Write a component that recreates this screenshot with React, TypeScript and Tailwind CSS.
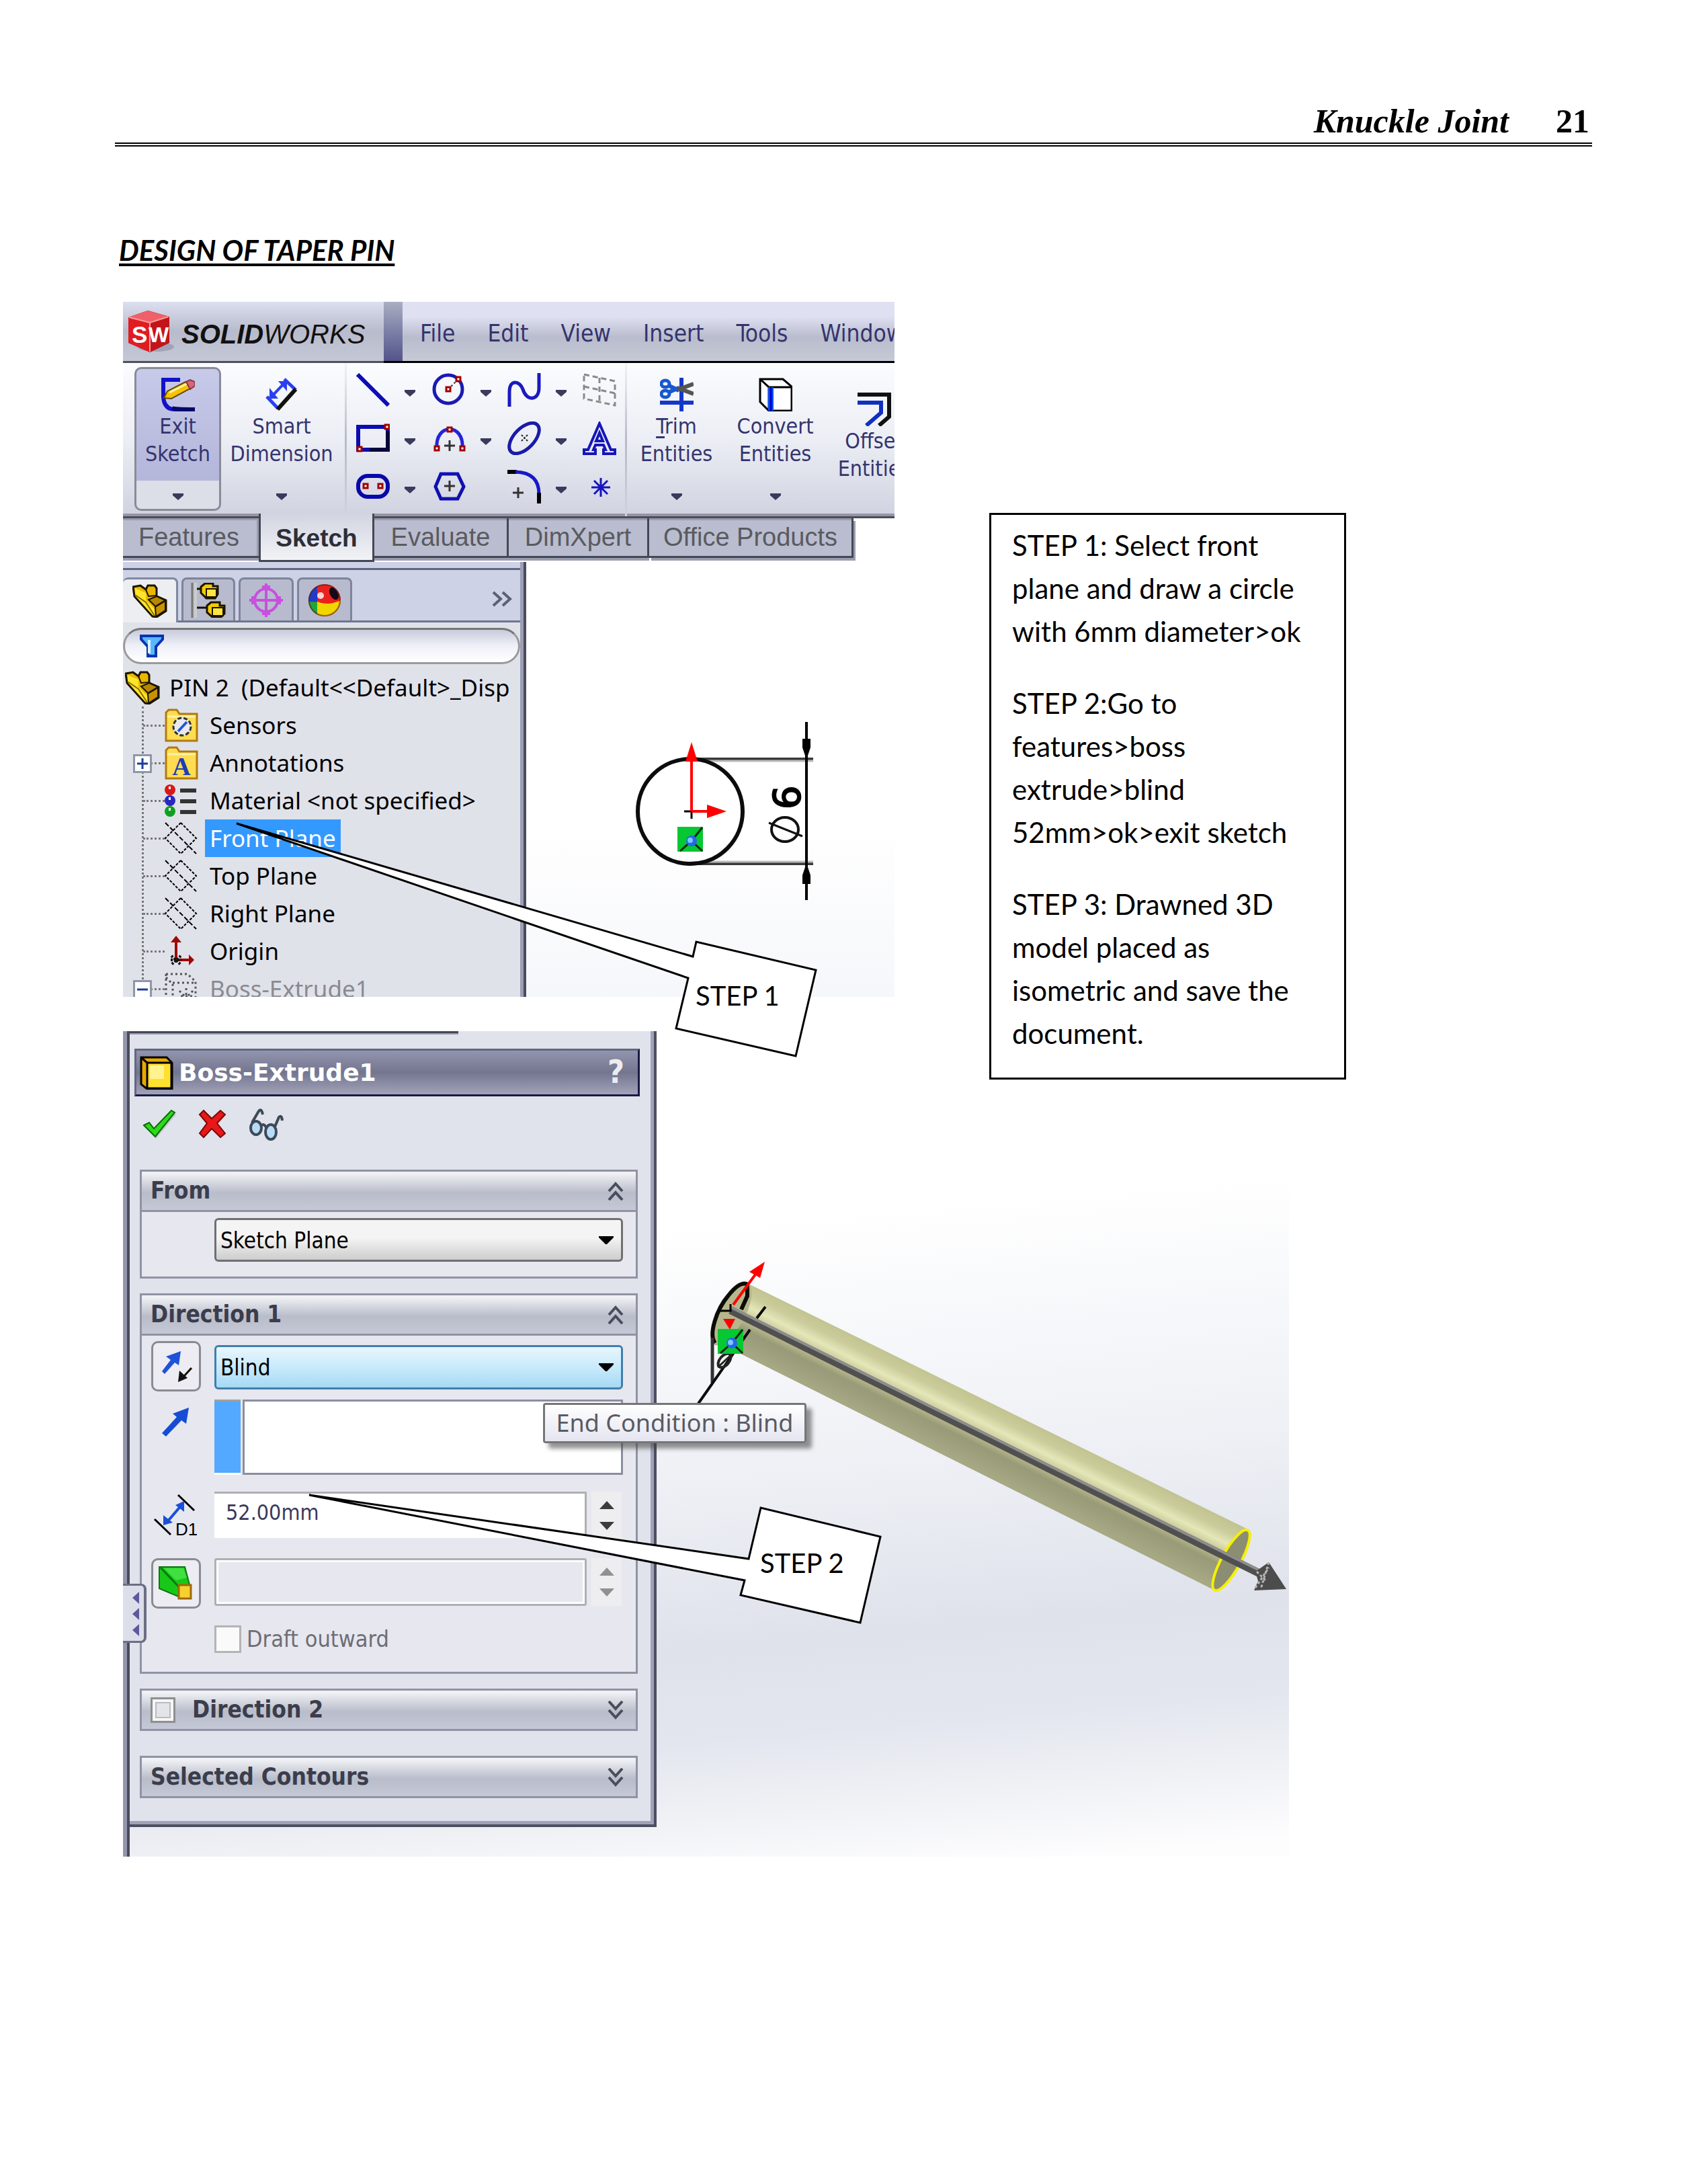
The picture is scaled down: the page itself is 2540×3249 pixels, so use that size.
import type { ReactNode } from "react";

function Caret({ className = "" }: { className?: string }) {
  return (
    <svg viewBox="0 0 16 10" className={`h-[10px] w-[16px] shrink-0 ${className}`}>
      <path d="M0 0H16V3L8 10L0 3Z" fill="#3a3a5c" />
    </svg>
  );
}

function SelectCaret() {
  return (
    <svg viewBox="0 0 22 12" className="pointer-events-none absolute right-[14px] top-[27px] h-[12px] w-[22px]">
      <path d="M0 0H22V2L12 12H10L0 2Z" fill="#000" />
    </svg>
  );
}

function Chevrons({ down = false }: { down?: boolean }) {
  return (
    <svg viewBox="0 0 24 28" className={`h-[28px] w-[24px] ${down ? "rotate-180" : ""}`} fill="none" stroke="#4a4d5c" strokeWidth="4">
      <path d="M2 14L12 3L22 14M2 27L12 16L22 27" />
    </svg>
  );
}

function Logo() {
  return (
    <svg viewBox="0 0 70 66" className="h-[66px] w-[70px]">
      <ellipse cx="42" cy="56" rx="27" ry="7" fill="#8d90a4" opacity="0.6" />
      <path d="M1 12L30 2L62 11V50L33 64L1 50Z" fill="#b01018" />
      <path d="M1 12L30 2L62 11L33 20Z" fill="#f06068" />
      <path d="M1 12L33 20V64L1 50Z" fill="#e01c22" />
      <path d="M33 20L62 11V50L33 64Z" fill="#c3141c" />
      <path d="M2 12L33 20L61 11M33 20V63" fill="none" stroke="#ff9a98" strokeWidth="2" />
      <g fill="#fff" fontFamily="Liberation Sans Narrow, Liberation Sans, sans-serif" fontWeight="bold">
        <text x="6" y="50" fontSize="35">S</text>
        <text x="31" y="49" fontSize="32">W</text>
      </g>
    </svg>
  );
}

function ToolIcon({ children }: { children: ReactNode }) {
  return (
    <svg viewBox="0 0 50 50" className="h-[50px] w-[50px] shrink-0" fill="none">
      {children}
    </svg>
  );
}

// small red square used for sketch handles
function Handle({ x, y }: { x: number; y: number }) {
  return <rect x={x - 3} y={y - 3} width="6" height="6" fill="#fff" stroke="#a00000" strokeWidth="3" />;
}

const exitIcon = (
  <ToolIcon>
    <path d="M28 3H3V28Q4 47 20 47H50" stroke="#1212c8" strokeWidth="6" />
    <path d="M16 45Q20 47 50 47" stroke="#08086a" strokeWidth="6" />
    <path d="M4 30L9 20L36 6L43 16L15 31Z" fill="#f5c400" stroke="#6a4a00" strokeWidth="2" />
    <path d="M12 22L38 9" stroke="#fff0a0" strokeWidth="3" />
    <path d="M37 6L43 3L50 6V12L43 17Z" fill="#d06878" stroke="#903848" strokeWidth="2" />
  </ToolIcon>
);

const smartIcon = (
  <ToolIcon>
    <path d="M29 2L46 18" stroke="#2a40f0" strokeWidth="5" />
    <path d="M3 28L20 46" stroke="#2a40f0" strokeWidth="5" />
    <path d="M19 47L46 17" stroke="#111" strokeWidth="6" />
    <path d="M11 27L30 7" stroke="#2a40f0" strokeWidth="4" />
    <path d="M7 15V31H20Z M20 5H33V20Z" fill="#2a40f0" />
  </ToolIcon>
);

const trimIcon = (
  <ToolIcon>
    <path d="M32 0V50M0 37H50" stroke="#1538c8" strokeWidth="6" />
    <ellipse cx="8" cy="9" rx="6" ry="5" stroke="#1858d0" strokeWidth="5" />
    <ellipse cx="8" cy="24" rx="6" ry="5" stroke="#1858d0" strokeWidth="5" />
    <path d="M12 11L28 19M12 22L28 15" stroke="#1858d0" strokeWidth="6" />
    <path d="M26 18L50 9M26 15L50 24" stroke="#555" strokeWidth="6" />
  </ToolIcon>
);

const convertIcon = (
  <ToolIcon>
    <path d="M2 2H36L49 13V49H15L2 36Z" fill="#fff" stroke="#000" strokeWidth="3" />
    <path d="M2 2L15 14V49M15 14H49" stroke="#000" strokeWidth="3" />
    <path d="M18 14V49" stroke="#0a50ff" strokeWidth="8" />
    <path d="M18 14V49" stroke="#0000c8" strokeWidth="3" />
  </ToolIcon>
);

const offsetIcon = (
  <ToolIcon>
    <path d="M0 3H47V36L32 49" stroke="#111" strokeWidth="6" />
    <path d="M0 15H35V30L13 49" stroke="#1030c0" strokeWidth="6" />
  </ToolIcon>
);

const sketchTools: { name: string; menu: boolean; icon: ReactNode }[] = [
  { name: "Line", menu: true, icon: <path d="M2 2L48 48" stroke="#0c0cb8" strokeWidth="6" /> },
  {
    name: "Circle",
    menu: true,
    icon: (
      <>
        <circle cx="24" cy="24" r="21" stroke="#1a1ab4" strokeWidth="5" />
        <path d="M24 24L38 10" stroke="#333" strokeWidth="2" strokeDasharray="3 3" />
        <Handle x={24} y={24} />
        <Handle x={39} y={9} />
      </>
    ),
  },
  { name: "Spline", menu: true, icon: <path d="M3 50V28C3 8 19 12 23 24C28 42 47 42 47 22V0" stroke="#1a1ac0" strokeWidth="5" /> },
  {
    name: "Grid System",
    menu: false,
    icon: <path d="M2 2L48 12V48L2 38ZM2 20L48 30M25 7V43" stroke="#8a8a8a" strokeWidth="3" strokeDasharray="8 5" />,
  },
  {
    name: "Rectangle",
    menu: true,
    icon: (
      <>
        <path d="M3 8H47V42H3Z" stroke="#0c0cb0" strokeWidth="6" />
        <path d="M47 14V42H20" stroke="#06063c" strokeWidth="6" />
        <Handle x={46} y={8} />
        <Handle x={5} y={41} />
      </>
    ),
  },
  {
    name: "Arc",
    menu: true,
    icon: (
      <>
        <path d="M7 40C4 2 48 2 45 40" stroke="#2424d8" strokeWidth="5" />
        <path d="M26 28V44M18 36H34" stroke="#333" strokeWidth="3" />
        <Handle x={26} y={12} />
        <Handle x={7} y={40} />
        <Handle x={45} y={40} />
      </>
    ),
  },
  {
    name: "Ellipse",
    menu: true,
    icon: (
      <>
        <ellipse cx="25" cy="25" rx="28" ry="15" transform="rotate(-46 25 25)" stroke="#1a1aa8" strokeWidth="5" />
        <path d="M21 20L30 29M30 20L21 29" stroke="#222" strokeWidth="2" strokeDasharray="3 2" />
      </>
    ),
  },
  {
    name: "Text",
    menu: false,
    icon: (
      <>
        <path d="M25 3L42 42H48V48H31V42H34L31 35H19L16 42H19V48H2V42H8Z" stroke="#1616b8" strokeWidth="4" />
        <path d="M25 17L20 29H30Z" stroke="#1616b8" strokeWidth="4" />
      </>
    ),
  },
  {
    name: "Slot",
    menu: true,
    icon: (
      <>
        <rect x="3" y="9" width="44" height="31" rx="14" stroke="#0808a8" strokeWidth="6" />
        <Handle x={14} y={24} />
        <Handle x={36} y={24} />
      </>
    ),
  },
  {
    name: "Polygon",
    menu: false,
    icon: (
      <>
        <path d="M13 6H38L47 25L38 43H13L5 25Z" stroke="#1010b0" strokeWidth="5" />
        <path d="M26 16V32M18 24H34" stroke="#333" strokeWidth="3" />
      </>
    ),
  },
  {
    name: "Fillet",
    menu: true,
    icon: (
      <>
        <path d="M0 3H14" stroke="#000" strokeWidth="6" />
        <path d="M12 3Q47 4 47 36" stroke="#1818c8" strokeWidth="5" />
        <path d="M47 34V50" stroke="#000" strokeWidth="6" />
        <path d="M16 26V42M8 34H24" stroke="#333" strokeWidth="3" />
      </>
    ),
  },
  {
    name: "Point",
    menu: false,
    icon: <path d="M27 12V40M13 26H41M17 16L37 36M37 16L17 36" stroke="#1414c0" strokeWidth="3" />,
  },
];

function BigTool({ icon, children, className = "" }: { icon: ReactNode; children: ReactNode; className?: string }) {
  return (
    <button className={`flex flex-col items-center text-center leading-[41px] ${className}`}>
      {icon}
      <span className="mt-[2px] whitespace-nowrap">{children}</span>
      <Caret className="mt-[38px]" />
    </button>
  );
}

function TitleBar() {
  const menus = ["File", "Edit", "View", "Insert", "Tools", "Window"];
  return (
    <div className="flex h-[91px] shrink-0">
      <div className="flex w-[388px] shrink-0 items-center gap-[10px] border-b-[3px] border-[#50505e] bg-linear-to-b from-[#dcdff0] via-[#b8bbcc] to-[#c4c8d6] pl-[7px]">
        <Logo />
        <span className="pt-2 font-[family-name:'Liberation_Sans',sans-serif] text-[40px] text-[#111] italic">
          <b>SOLID</b>WORKS
        </span>
      </div>
      <div className="w-[28px] shrink-0 border-b-[3px] border-black bg-linear-to-b from-[#a9aec2] to-[#54548a]" />
      <nav className="flex grow items-center gap-12 border-b-[3px] border-black bg-linear-to-b from-[#dfe1f2] from-25% via-[#b9bccd] via-60% to-[#c6cad6] pt-[6px] pl-[26px] text-[35px] text-[#34346e]">
        {menus.map((m) => (
          <a key={m} href="#">
            {m}
          </a>
        ))}
      </nav>
    </div>
  );
}

function Toolbar() {
  return (
    <div className="flex h-[231px] shrink-0 border-b-[3px] border-[#4a4c5a] bg-linear-to-b from-[#fbfcfe] via-[#eceef5] to-[#d0d2e0] pl-[17px] text-[32px] text-[#34346e] shadow-[inset_0_-4px_0_#9496a6]">
      <div className="mt-[6px] h-[214px] w-[129px] shrink-0 rounded-[10px] border-[3px] border-[#8a8b98] bg-linear-to-b from-[#c8caea] from-0% via-[#b4b6da] via-80% to-[#dcdee8] to-80%">
        <BigTool icon={exitIcon} className="w-full pt-[13px]">
          Exit
          <br />
          Sketch
        </BigTool>
      </div>
      <BigTool icon={smartIcon} className="ml-[10px] w-[160px] shrink-0 pt-[22px]">
        Smart
        <br />
        Dimension
      </BigTool>
      <div className="mx-[14px] w-[3px] shrink-0 bg-linear-to-b from-[#f2f3f8] via-[#b8bac8] to-[#d0d2e0]" />
      <div className="mt-1 grid h-[216px] w-[388px] shrink-0 grid-cols-[113px_112px_112px_50px] grid-rows-3">
        {sketchTools.map((t) => (
          <button key={t.name} aria-label={t.name} className="flex items-center gap-[22px]">
            <ToolIcon>{t.icon}</ToolIcon>
            {t.menu && <Caret className="mt-[10px]" />}
          </button>
        ))}
      </div>
      <div className="ml-[12px] w-[3px] shrink-0 bg-linear-to-b from-[#f2f3f8] via-[#b8bac8] to-[#d0d2e0]" />
      <BigTool icon={trimIcon} className="w-[147px] shrink-0 pt-[22px]">
        <u className="underline-offset-4">T</u>rim
        <br />
        Entities
      </BigTool>
      <BigTool icon={convertIcon} className="w-[147px] shrink-0 pt-[22px]">
        Convert
        <br />
        Entities
      </BigTool>
      <button className="flex w-[147px] shrink-0 flex-col items-center pt-[44px] leading-[41px]">
        {offsetIcon}
        <span className="mt-[2px]">
          Offset
          <br />
          Entities
        </span>
      </button>
    </div>
  );
}

function CommandTabs() {
  return (
    <div className="flex h-[65px] shrink-0 items-start bg-white font-[family-name:'Liberation_Sans',sans-serif] text-[38px] text-[#5a5a60]">
      <button className="h-[59px] w-[202px] border-b-[3px] border-[#444854] bg-[#b9bdcf] pr-[6px] shadow-[inset_-3px_3px_0_#9a9caf,0_4px_0_#9a9caf]">
        Features
      </button>
      <button className="relative -mt-[7px] h-[72px] w-[172px] border-x-[3px] border-b-[3px] border-[#444854] bg-linear-to-b from-[#d2d4e1] to-[#f2f3f6] pt-[4px] text-[37px] font-bold text-[#2e2e38]">
        Sketch
      </button>
      <button className="h-[59px] w-[200px] border-r-[3px] border-b-[3px] border-[#444854] bg-[#b9bdcf] shadow-[inset_0_3px_0_#9a9caf,0_4px_0_#9a9caf]">
        Evaluate
      </button>
      <button className="h-[59px] w-[209px] border-r-[3px] border-b-[3px] border-[#444854] bg-[#b9bdcf] shadow-[inset_0_3px_0_#9a9caf,0_4px_0_#9a9caf]">
        DimXpert
      </button>
      <button className="h-[59px] w-[304px] border-r-[3px] border-b-[3px] border-[#444854] bg-[#b9bdcf] shadow-[inset_0_3px_0_#9a9caf,3px_4px_0_#9a9caf]">
        Office Products
      </button>
    </div>
  );
}

function PartIcon() {
  return (
    <svg viewBox="0 0 52 50" className="h-[50px] w-[52px] shrink-0">
      <path d="M1 4L12 2L20 8L23 2L33 2L36 6V18L50 24V40L36 49L30 48L3 18Z" fill="#e8b800" stroke="#1c1400" strokeWidth="3" />
      <path d="M4 6L20 13V24L34 38V47L30 46L4 17Z" fill="#ffe52a" />
      <path d="M4 16L20 27L33 47" fill="none" stroke="#8a6a00" strokeWidth="2" />
      <path d="M34 34L49 25V39L35 48Z" fill="#c89200" stroke="#1c1400" strokeWidth="2" />
      <path d="M24 23L36 18L49 24L34 33Z" fill="#b88600" stroke="#1c1400" strokeWidth="2" />
      <path d="M12 3L20 8L24 18L36 17" fill="none" stroke="#1c1400" strokeWidth="2" />
    </svg>
  );
}

function ConfigIcon() {
  return (
    <svg viewBox="0 0 52 52" className="h-[52px] w-[52px]" fill="none">
      <path d="M2 0V52" stroke="#777" strokeWidth="3" />
      <path d="M7 0V52" stroke="#ccc" strokeWidth="4" />
      <path d="M9 9H20M9 37H28" stroke="#111" strokeWidth="3" />
      <path d="M15 6L21 1H33V5H40V17L36 23H23L15 15Z" fill="#f4cc00" stroke="#1c1400" strokeWidth="3" />
      <path d="M23 9H38V21H23Z" fill="#ffe640" stroke="#1c1400" strokeWidth="2" />
      <path d="M24 34L30 29H43V34H50V46L45 51H32L24 44Z" fill="#f4cc00" stroke="#1c1400" strokeWidth="3" />
      <path d="M32 37H48V49H32Z" fill="#ffe640" stroke="#1c1400" strokeWidth="2" />
    </svg>
  );
}

function TargetIcon() {
  return (
    <svg viewBox="0 0 50 50" className="h-[50px] w-[50px]" fill="none" stroke="#c84fe0" strokeWidth="4">
      <circle cx="25" cy="25" r="17" />
      <path d="M25 0V50M0 25H50M19 5H31M19 45H31M5 19V31M45 19V31" />
    </svg>
  );
}

function BallIcon() {
  return (
    <svg viewBox="0 0 50 50" className="h-[50px] w-[50px]">
      <circle cx="25" cy="25" r="24" fill="#e8211c" />
      <path d="M14 4A24 24 0 0 0 1 27L14 27Z" fill="#1e3cc8" />
      <path d="M1 27A24 24 0 0 0 14 46L15 28Z" fill="#1aa83c" />
      <path d="M14 27Q30 34 49 25A24 24 0 0 1 14 46Z" fill="#f2d600" />
      <ellipse cx="39" cy="15" rx="6" ry="10" transform="rotate(-28 39 15)" fill="#150818" />
      <circle cx="19" cy="18" r="5" fill="#fff" opacity="0.8" />
      <circle cx="25" cy="25" r="23" fill="none" stroke="#5a2010" strokeWidth="2" opacity="0.6" />
    </svg>
  );
}

function PlaneIcon() {
  return (
    <svg viewBox="0 0 50 50" className="h-[50px] w-[50px]" fill="none" stroke="#000" strokeWidth="2">
      <path d="M24 2L47 25L24 48L1 25Z" strokeDasharray="4 2" />
      <path d="M1 2L47 48" strokeDasharray="7 3" />
    </svg>
  );
}

function Folder({ children }: { children: ReactNode }) {
  return (
    <svg viewBox="0 0 50 50" className="h-[50px] w-[50px]">
      <path d="M2 48V6L6 2H18L22 8H48V48Z" fill="#ffdc50" stroke="#b07a10" strokeWidth="3" />
      <path d="M4 12H46" stroke="#fff0a8" strokeWidth="3" />
      {children}
    </svg>
  );
}

const sensorsIcon = (
  <Folder>
    <circle cx="26" cy="27" r="13" fill="#e8eaf0" stroke="#333" strokeWidth="3" strokeDasharray="6 3" />
    <path d="M20 34L33 20" stroke="#2456d8" strokeWidth="4" />
  </Folder>
);

const annotationsIcon = (
  <Folder>
    <text x="25" y="43" textAnchor="middle" fontSize="38" fontWeight="bold" fontFamily="Liberation Serif, serif" fill="#1c3cb8">
      A
    </text>
  </Folder>
);

const materialIcon = (
  <svg viewBox="0 0 50 50" className="h-[50px] w-[50px]">
    <circle cx="8" cy="9" r="8" fill="#d81818" />
    <circle cx="8" cy="25" r="8" fill="#2828c0" />
    <circle cx="8" cy="41" r="8" fill="#10a020" />
    <path d="M6 6h3M6 22h3M6 38h3" stroke="#fff" strokeWidth="4" />
    <path d="M23 10H47M23 26H47M23 42H47" stroke="#333" strokeWidth="6" />
  </svg>
);

const originIcon = (
  <svg viewBox="0 0 50 50" className="h-[50px] w-[50px]">
    <path d="M17 38V8M17 38H38" stroke="#a00808" strokeWidth="4" />
    <path d="M9 12L17 2L25 12ZM36 30L44 38L36 46Z" fill="#a00808" />
    <path d="M10 32L24 45M24 32L10 45M9 38H25" stroke="#111" strokeWidth="4" strokeDasharray="3 2" />
  </svg>
);

const bossIcon = (
  <svg viewBox="0 0 50 50" className="h-[50px] w-[50px]" fill="none" stroke="#555" strokeWidth="3" strokeDasharray="3 4">
    <path d="M2 3H34L46 14V50M2 3V50M2 8L12 18V50M12 16H46" />
    <path d="M22 28L42 48M42 28L22 48M32 24V50M24 36H42" />
  </svg>
);

const treeItems: { label: string; icon: ReactNode; expand?: string; selected?: boolean; muted?: boolean }[] = [
  { label: "Sensors", icon: sensorsIcon },
  { label: "Annotations", icon: annotationsIcon, expand: "+" },
  { label: "Material <not specified>", icon: materialIcon },
  { label: "Front Plane", icon: <PlaneIcon />, selected: true },
  { label: "Top Plane", icon: <PlaneIcon /> },
  { label: "Right Plane", icon: <PlaneIcon /> },
  { label: "Origin", icon: originIcon },
  { label: "Boss-Extrude1", icon: bossIcon, expand: "-", muted: true },
];

function FeatureTree() {
  return (
    <aside className="flex w-[600px] shrink-0 flex-col border-r-[4px] border-[#4a4c5e] bg-[#e0e2ea]">
      <div className="flex grow flex-col overflow-hidden border-r-[5px] border-[#9c9fb5]">
        <div className="flex h-[90px] shrink-0 items-end border-b-[3px] border-[#6f7690] bg-[#ced2e6] shadow-[inset_0_9px_0_#ced2e6,inset_0_12px_0_#5f6680]">
          <button aria-label="Feature tree" className="-mb-[3px] flex h-[67px] w-[82px] items-center justify-center rounded-t-[8px] border-t-[3px] border-r-[3px] border-[#8088a0] bg-[#eceef2]">
            <PartIcon />
          </button>
          <button aria-label="Properties" className="ml-[5px] flex h-[64px] w-[80px] items-center justify-center rounded-t-[8px] border-x-[3px] border-t-[3px] border-[#7d849c] bg-[#b7bbcd]">
            <ConfigIcon />
          </button>
          <button aria-label="DimXpert manager" className="ml-[5px] flex h-[64px] w-[82px] items-center justify-center rounded-t-[8px] border-x-[3px] border-t-[3px] border-[#7d849c] bg-[#b7bbcd]">
            <TargetIcon />
          </button>
          <button aria-label="Display manager" className="ml-[5px] flex h-[64px] w-[82px] items-center justify-center rounded-t-[8px] border-x-[3px] border-t-[3px] border-[#7d849c] bg-[#b7bbcd]">
            <BallIcon />
          </button>
          <button aria-label="More" className="mr-[12px] mb-[20px] ml-auto">
            <svg viewBox="0 0 30 24" className="h-[24px] w-[30px]" fill="none" stroke="#5c6070" strokeWidth="4">
              <path d="M2 2L13 12L2 22M16 2L27 12L16 22" />
            </svg>
          </button>
        </div>
        <label className="mt-[8px] flex h-[54px] shrink-0 items-center rounded-full border-[3px] border-t-[#777] border-[#9a9a9a] bg-linear-to-b from-[#c8cbdc] via-[#f0f1f8] to-white pl-[22px]">
          <svg viewBox="0 0 36 34" className="h-[34px] w-[36px] shrink-0">
            <path d="M2 2H34V7L24 18V32H12V18L2 7Z" fill="#58b8ff" stroke="#0a34b0" strokeWidth="4" />
            <path d="M14 8V28" stroke="#d8f2ff" strokeWidth="4" />
          </svg>
          <input aria-label="Filter" className="w-full min-w-0 grow bg-transparent px-2 outline-none" />
        </label>
        <div className="relative mt-[7px] shrink-0 font-[family-name:'Noto_Sans',sans-serif] text-[35px] leading-[56px] text-black">
          <div className="absolute top-[56px] bottom-0 left-[28px] border-l-[3px] border-dotted border-[#777]" />
          <div className="flex h-[56px] items-center gap-[14px] whitespace-pre pl-[3px]">
            <PartIcon />
            {"PIN 2  (Default<<Default>_Disp"}
          </div>
          <ul>
            {treeItems.map((item) => (
              <li key={item.label} className="relative flex h-[56px] items-center">
                <span className="ml-[30px] w-[32px] border-t-[3px] border-dotted border-[#777]" />
                {item.expand && (
                  <button
                    aria-label={item.expand === "+" ? "Expand" : "Collapse"}
                    className="absolute left-[15px] top-[15px] flex h-[28px] w-[28px] items-center justify-center border-[3px] border-[#8f96a8] bg-white"
                  >
                    <svg viewBox="0 0 16 16" className="h-[16px] w-[16px]" stroke="#1c3c9c" strokeWidth="3">
                      <path d={item.expand === "+" ? "M0 8H16M8 0V16" : "M0 8H16"} />
                    </svg>
                  </button>
                )}
                <span className="w-[60px]">{item.icon}</span>
                <span className={`px-[7px] ${item.selected ? "bg-[#3399ff] text-white" : item.muted ? "text-[#8a8a90]" : ""}`}>
                  {item.label}
                </span>
              </li>
            ))}
          </ul>
        </div>
      </div>
    </aside>
  );
}

function OriginBadge({ x, y }: { x: number; y: number }) {
  return (
    <g transform={`translate(${x} ${y})`}>
      <rect width="38" height="37" fill="#06c832" />
      <path d="M4 36L21 21L37 36M21 21L37 1" fill="none" stroke="#0a2a10" strokeWidth="3" />
      <circle cx="21" cy="21" r="8" fill="#2468e8" />
      <circle cx="19" cy="20" r="4" fill="#7cc8ff" />
    </g>
  );
}

function SketchView() {
  return (
    <svg viewBox="783 836 548 647" className="h-[647px] min-w-0 grow bg-linear-to-b from-white from-60% to-[#f6f7fa]">
      <path d="M1035 1129H1210M1035 1285H1210" stroke="#3a3a3a" strokeWidth="4" />
      <path d="M1050 1132H1210M1050 1282H1210" stroke="#bbb" strokeWidth="3" />
      <circle cx="1027" cy="1207" r="78" fill="none" stroke="#0c0c0c" strokeWidth="6" />
      <path d="M1200 1074V1339" stroke="#000" strokeWidth="4" />
      <path d="M1194 1099H1206V1112L1200 1130L1194 1112ZM1194 1315H1206V1302L1200 1284L1194 1302Z" fill="#000" />
      <path d="M1018 1207H1029V1218" fill="none" stroke="#000" strokeWidth="3" />
      <path d="M1029 1207V1130M1029 1207H1056" stroke="#f00" strokeWidth="4" />
      <path d="M1020 1133L1029 1104L1038 1133ZM1052 1197L1081 1207L1052 1217Z" fill="#f00" />
      <OriginBadge x={1008} y={1230} />
      <g transform="translate(1190 1254) rotate(-90)" fontFamily="DejaVu Sans, sans-serif">
        <ellipse cx="20" cy="-22" rx="18" ry="20" fill="none" stroke="#111" strokeWidth="4" />
        <path d="M10 4L30 -46" stroke="#111" strokeWidth="3" />
        <text x="50" y="0" fontSize="56" stroke="#000" strokeWidth="2">
          6
        </text>
      </g>
    </svg>
  );
}

function SketchFigure() {
  return (
    <div className="flex h-[1034px] w-[1148px] shrink-0 flex-col overflow-hidden">
      <TitleBar />
      <Toolbar />
      <CommandTabs />
      <div className="flex grow items-start">
        <FeatureTree />
        <SketchView />
      </div>
    </div>
  );
}

function Instructions() {
  return (
    <section className="relative z-10 mt-[314px] -mb-40 ml-[141px] w-[531px] border-[3px] border-black bg-white px-[31px] pt-[13px] pb-[20px] font-[family-name:Lato,sans-serif] text-[42px] leading-[64px]">
      <p className="mb-[43px]">
        STEP 1: Select front
        <br />
        plane and draw a circle
        <br />
        with 6mm diameter&gt;ok
      </p>
      <p className="mb-[43px]">
        STEP 2:Go to
        <br />
        features&gt;boss
        <br />
        extrude&gt;blind
        <br />
        52mm&gt;ok&gt;exit sketch
      </p>
      <p className="mb-[14px]">
        STEP 3: Drawned 3D
        <br />
        model placed as
        <br />
        isometric and save the
        <br />
        document.
      </p>
    </section>
  );
}

function SectionHeader({ children, down }: { children: ReactNode; down?: boolean }) {
  return (
    <div className="flex h-[57px] items-center justify-between bg-linear-to-b from-[#f0f1f5] from-5% via-[#b9bdca] via-55% to-[#c5c8d6] pr-[18px] pl-[13px] text-[35px] font-bold text-[#3b3d4c]">
      {children}
      <button aria-label={down ? "Expand section" : "Collapse section"}>
        <Chevrons down={down} />
      </button>
    </div>
  );
}

function Spinner({ muted = false }: { muted?: boolean }) {
  return (
    <span className="ml-[7px] flex h-[71px] w-[45px] flex-col items-center justify-around bg-[#eeeef0] py-1">
      <button aria-label="Increase">
        <svg viewBox="0 0 22 12" className="block h-[12px] w-[22px]">
          <path d="M0 12L11 0L22 12Z" fill={muted ? "#909090" : "#3c3c3c"} />
        </svg>
      </button>
      <button aria-label="Decrease">
        <svg viewBox="0 0 22 12" className="block h-[12px] w-[22px]">
          <path d="M0 0L11 12L22 0Z" fill={muted ? "#909090" : "#3c3c3c"} />
        </svg>
      </button>
    </span>
  );
}

function PropertyPanel() {
  return (
    <div className="relative h-[1184px] w-[784px] shrink-0 border-r-[4px] border-b-[4px] border-[#4d4e5f] bg-[#e0e3eb] text-[33px] shadow-[inset_-5px_-5px_0_#9fa2b8]">
      <div className="h-[5px] w-[489px] border-b-2 border-[#9a9cae] bg-[#454656]" />
      <div className="mt-[21px] ml-[7px] flex h-[71px] w-[752px] items-center border-[3px] border-t-[#626880] border-r-[#1a1a44] border-b-[#1a1a44] border-l-[#626880] bg-linear-to-b from-[#9394ae] via-[#74768f] to-[#a2a2ba] pr-[20px] pl-[5px] text-white">
        <svg viewBox="0 0 50 50" className="h-[50px] w-[50px]">
          <path d="M2 2H40L48 10V49H11L2 42Z" fill="#e8a800" stroke="#000" strokeWidth="3" />
          <path d="M11 10H47V48H11Z" fill="#ffe030" stroke="#000" strokeWidth="3" />
          <path d="M3 3L11 10" stroke="#000" strokeWidth="3" />
          <path d="M15 14H36V34H15Z" fill="#fff8a8" opacity="0.8" />
        </svg>
        <h3 className="ml-[8px] font-[family-name:'DejaVu_Sans',sans-serif] text-[36px] font-bold">Boss-Extrude1</h3>
        <button className="ml-auto pb-1 text-[48px] leading-none font-bold text-[#ececf0]">?</button>
      </div>
      <div className="mt-[17px] ml-[19px] flex items-center gap-[31px]">
        <button aria-label="OK">
          <svg viewBox="0 0 52 46" className="h-[46px] w-[52px]">
            <path d="M6 27L14 25L20 33L44 5L50 8L20 44Z" fill="#999" opacity="0.4" />
            <path d="M2 24L10 20L17 29L43 2L48 5L19 41Z" fill="#2adc18" stroke="#0a6a08" strokeWidth="2" />
          </svg>
        </button>
        <button aria-label="Cancel">
          <svg viewBox="0 0 44 46" className="h-[46px] w-[44px]">
            <path d="M2 8L8 2L20 14L33 2L40 8L28 21L40 36L33 42L20 29L8 42L2 36L13 21Z" fill="#e81818" stroke="#7a0808" strokeWidth="2" />
          </svg>
        </button>
        <button aria-label="Preview">
          <svg viewBox="0 0 52 50" className="h-[50px] w-[52px]" fill="none" stroke="#3c4a58" strokeWidth="4">
            <ellipse cx="11" cy="30" rx="8" ry="10" fill="#b8dcf8" />
            <ellipse cx="33" cy="36" rx="8" ry="11" fill="#b8dcf8" />
            <path d="M18 27Q22 22 26 29M5 22L15 5Q19 0 21 10M39 28L45 14Q49 10 50 19" />
          </svg>
        </button>
      </div>

      <section className="mt-[42px] ml-[15px] w-[741px] border-[3px] border-[#9093a3] bg-[#e6e7ef]">
        <SectionHeader>From</SectionHeader>
        <div className="border-t-[3px] border-[#9093a3] pt-[9px] pb-[22px] pl-[108px]">
          <div className="relative w-[608px]">
            <select aria-label="From" className="h-[65px] w-full appearance-none rounded-[6px] border-[3px] border-[#707070] bg-linear-to-b from-[#f4f4f4] from-45% to-[#cdcdcd] px-[6px] pt-[2px]">
              <option>Sketch Plane</option>
            </select>
            <SelectCaret />
          </div>
        </div>
      </section>

      <section className="mt-[22px] ml-[15px] w-[741px] border-[3px] border-[#9093a3] bg-[#e6e7ef]">
        <SectionHeader>Direction 1</SectionHeader>
        <div className="grid grid-cols-[94px_608px] gap-y-[12px] border-t-[3px] border-[#9093a3] pt-[8px] pb-[28px] pl-[14px]">
          <button aria-label="Reverse direction" className="h-[75px] w-[74px] rounded-[10px] border-[3px] border-[#8a8a92] bg-[#ececf2]">
            <svg viewBox="0 0 68 69" className="h-[69px] w-[68px]">
              <path d="M13 42L26 25L19 20L41 12L38 33L32 29L17 46Z" fill="#1e52d8" />
              <path d="M57 37L46 49" stroke="#111" strokeWidth="3" />
              <path d="M37 58L39 41L51 52Z" fill="#111" />
            </svg>
          </button>
          <div className="relative mt-[6px] h-[66px]">
            <select aria-label="End condition" className="h-[66px] w-full appearance-none rounded-[6px] border-[3px] border-[#3f7fae] bg-linear-to-b from-[#e8f6fd] via-[#c8eafb] to-[#a6d9f4] px-[6px] pt-[2px]">
              <option>Blind</option>
            </select>
            <SelectCaret />
          </div>
          <svg viewBox="0 0 50 50" className="mt-[8px] ml-[12px] h-[50px] w-[50px]">
            <path d="M4 42L26 18L20 13L44 4L40 28L33 23L10 47Z" fill="#164cd4" />
          </svg>
          <div className="flex h-[112px] gap-[3px]">
            <span className="w-[39px] border-t-[3px] border-b-[3px] border-t-[#a0a0a0] border-b-white bg-[#53a8ff]" />
            <span className="grow border-[3px] border-[#8b8ea0] bg-white" />
          </div>
          <svg viewBox="0 0 66 66" className="mt-[15px] ml-[2px] h-[66px] w-[66px]" fill="none" stroke="#000" strokeWidth="3">
            <path d="M38 3L62 26M3 39L27 62" />
            <path d="M20 45L44 17" stroke="#1850d8" strokeWidth="4" />
            <path d="M16 48V33L30 44ZM47 12V28L34 18Z" fill="#1850d8" stroke="none" />
            <text x="34" y="63" fontSize="26" fill="#000" stroke="none" fontFamily="Liberation Sans, sans-serif">
              D1
            </text>
          </svg>
          <div className="mt-[13px] flex h-[71px]">
            <input
              aria-label="Depth"
              defaultValue="52.00mm"
              className="h-[69px] w-[554px] border-t-[3px] border-r-[3px] border-[#b0b0b0] bg-white px-[17px] pb-[10px] text-[32px] text-[#3a3a5a]"
            />
            <Spinner />
          </div>
          <button aria-label="Draft" className="mt-[16px] h-[75px] w-[74px] rounded-[10px] border-[3px] border-[#8a8a92] bg-[#ececf2]">
            <svg viewBox="0 0 68 69" className="h-[69px] w-[68px]">
              <path d="M9 10H47L56 44L42 56L9 42Z" fill="#18c818" stroke="#0a7a10" strokeWidth="2" />
              <path d="M11 11L46 48" stroke="#0a7a10" strokeWidth="3" />
              <path d="M16 12H45L50 26L34 30Z" fill="#3fe040" />
              <path d="M38 37H56V57H38Z" fill="#f8d030" stroke="#a06808" strokeWidth="3" />
            </svg>
          </button>
          <div className="mt-[16px] flex h-[71px]">
            <input
              aria-label="Draft angle"
              disabled
              className="h-[71px] w-[554px] rounded-[3px] border-[3px] border-[#b0b0b4] bg-[#e6e7ef] shadow-[inset_0_0_0_3px_#fff]"
            />
            <Spinner muted />
          </div>
          <label className="col-start-2 mt-[13px] flex h-[41px] items-center gap-[8px] text-[34px] text-[#6e6e74]">
            <input type="checkbox" disabled className="h-[41px] w-[40px] appearance-none border-[3px] border-[#b4b4b4] bg-[#fafafa]" />
            Draft outward
          </label>
        </div>
      </section>

      <section className="mt-[22px] ml-[15px] w-[741px] border-[3px] border-[#9093a3]">
        <SectionHeader down>
          <label className="flex items-center gap-[25px]">
            <input type="checkbox" className="h-[38px] w-[37px] appearance-none border-[3px] border-[#8f8f8f] bg-[#e4e4e8] shadow-[inset_0_0_0_4px_#f6f6f6,inset_0_0_0_6px_#b8bcc4]" />
            Direction 2
          </label>
        </SectionHeader>
      </section>
      <section className="mt-[37px] ml-[15px] w-[741px] border-[3px] border-[#9093a3]">
        <SectionHeader down>Selected Contours</SectionHeader>
      </section>

      {/* splitter handle */}
      <button
        aria-label="Collapse panel"
        className="absolute top-[822px] -left-[10px] h-[88px] w-[35px] rounded-r-[8px] border-y-[3px] border-r-[4px] border-[#6c6e84] bg-[#dcdeea]"
      >
        <svg viewBox="0 0 31 82" className="h-[82px] w-[31px]" fill="#5a5a9c">
          <path d="M24 9V27L14 18ZM24 33V51L14 42ZM24 57V75L14 66Z" />
        </svg>
      </button>
    </div>
  );
}

function ModelView() {
  return (
    <svg viewBox="977 1534 941 1228" className="h-[1228px] min-w-0 grow">
      <defs>
        <linearGradient id="barrel" gradientUnits="userSpaceOnUse" x1="1300" y1="2002" x2="1257" y2="2089">
          <stop offset="0" stopColor="#c2c491" />
          <stop offset="0.16" stopColor="#cbcc9b" />
          <stop offset="0.32" stopColor="#e6e7b9" />
          <stop offset="0.48" stopColor="#c4c594" />
          <stop offset="0.66" stopColor="#989a78" />
          <stop offset="1" stopColor="#a7a884" />
        </linearGradient>
      </defs>
      <path d="M1112 1909L1857 2275L1808 2366L1066 1996Z" fill="url(#barrel)" />
      <ellipse cx="1088" cy="1955" rx="52" ry="20" transform="rotate(-61 1088 1955)" fill="#b6b78c" />
      <path d="M1112 1912V1928L1103 1948M1064 1998C1054 1985 1066 1948 1084 1927C1096 1912 1106 1907 1113 1911" fill="none" stroke="#0c0c08" strokeWidth="6" />
      <path d="M1060 1990V2057" stroke="#333" strokeWidth="5" />
      <path d="M1039 2088L1060 2058L1116 1978M1126 1961L1139 1944" fill="none" stroke="#0c0c0c" strokeWidth="4" />
      <ellipse cx="1078" cy="2024" rx="12" ry="7" transform="rotate(-50 1078 2024)" fill="none" stroke="#222" strokeWidth="4" />
      <path d="M1068 2034L1094 2010" fill="none" stroke="#222" strokeWidth="3" />
      <ellipse cx="1832" cy="2321" rx="51" ry="14" transform="rotate(-61 1832 2321)" fill="#8c8e72" stroke="#f6f000" strokeWidth="4" />
      <path d="M1087 1949L1875 2341" stroke="#505050" strokeWidth="12" />
      <path d="M1088 1945L1876 2337" stroke="#8e8e8e" strokeWidth="4" />
      <path d="M1888 2324L1914 2364L1866 2366L1872 2352L1868 2338Z" fill="#4c4c4c" />
      <path d="M1888 2324L1876 2364M1870 2338L1884 2352M1868 2362L1888 2332" stroke="#b4b4b4" strokeWidth="3" strokeDasharray="4 3" />
      <path d="M1070 1950H1087V1940" fill="none" stroke="#000" strokeWidth="3" />
      <path d="M1091 1941L1124 1896" stroke="#f00" strokeWidth="4" />
      <path d="M1138 1877L1115 1892L1131 1901ZM1076 1962H1094L1086 1978Z" fill="#f00" />
      <OriginBadge x={1068} y={1977} />
    </svg>
  );
}

function ExtrudeFigure() {
  return (
    <div className="relative mt-[51px] flex h-[1228px] w-[1735px] items-start bg-[linear-gradient(175deg,#fff_26%,#eef0f5_54%,#dfe2eb_72%,#e3e6ef_82%,#f0f1f5_90%,#fdfdfe_98%)]">
      <div className="h-[1228px] w-[10px] shrink-0 border-r-[4px] border-[#494a5c] bg-[#9496ab]" />
      <PropertyPanel />
      <ModelView />
      <div
        role="tooltip"
        className="absolute top-[553px] left-[625px] flex h-[60px] w-[392px] items-center justify-center rounded-[4px] border-[3px] border-[#767676] bg-linear-to-b from-white to-[#e4e5f0] font-[family-name:'Noto_Sans',sans-serif] text-[36px] whitespace-nowrap text-[#5a5a62] shadow-[8px_8px_6px_rgba(60,60,60,0.55)]"
      >
        End Condition : Blind
      </div>
    </div>
  );
}

function Callouts() {
  return (
    <svg viewBox="183 449 1735 2313" className="pointer-events-none absolute top-0 left-0 z-20 h-[2313px] w-[1735px]">
      <g fill="#fff" stroke="#000" strokeWidth="3">
        <path d="M352 1225L1031 1423L1036 1401L1214 1443L1184 1571L1006 1530L1024 1455Z" />
        <path d="M460 2224L1114 2319L1132 2243L1310 2286L1280 2414L1102 2373L1108 2351Z" />
      </g>
      <g fontFamily="Lato, sans-serif" fontSize="40">
        <text x="1035" y="1496">STEP 1</text>
        <text x="1131" y="2340">STEP 2</text>
      </g>
    </svg>
  );
}

export default function App() {
  return (
    <div className="min-h-screen bg-white pb-[487px] text-black">
      <header className="mx-[171px] flex h-[218px] items-end justify-end gap-[70px] border-b-[6px] border-double border-black pr-[4px] font-[family-name:'Liberation_Serif',serif] text-[50px] leading-[55px] font-bold">
        <span className="mb-1 italic">Knuckle Joint</span>
        <span className="mb-1">21</span>
      </header>
      <main className="ml-[183px]">
        <h1 className="-ml-[6px] pt-[127px] font-[family-name:Lato,sans-serif] text-[42px] leading-[54px] font-bold italic underline decoration-4 underline-offset-4">
          DESIGN OF TAPER PIN
        </h1>
        <div className="relative mt-[50px] font-[family-name:'DejaVu_Sans_Condensed','Noto_Sans',sans-serif]">
          <div className="flex h-[1034px] items-start">
            <SketchFigure />
            <Instructions />
          </div>
          <ExtrudeFigure />
          <Callouts />
        </div>
      </main>
    </div>
  );
}
